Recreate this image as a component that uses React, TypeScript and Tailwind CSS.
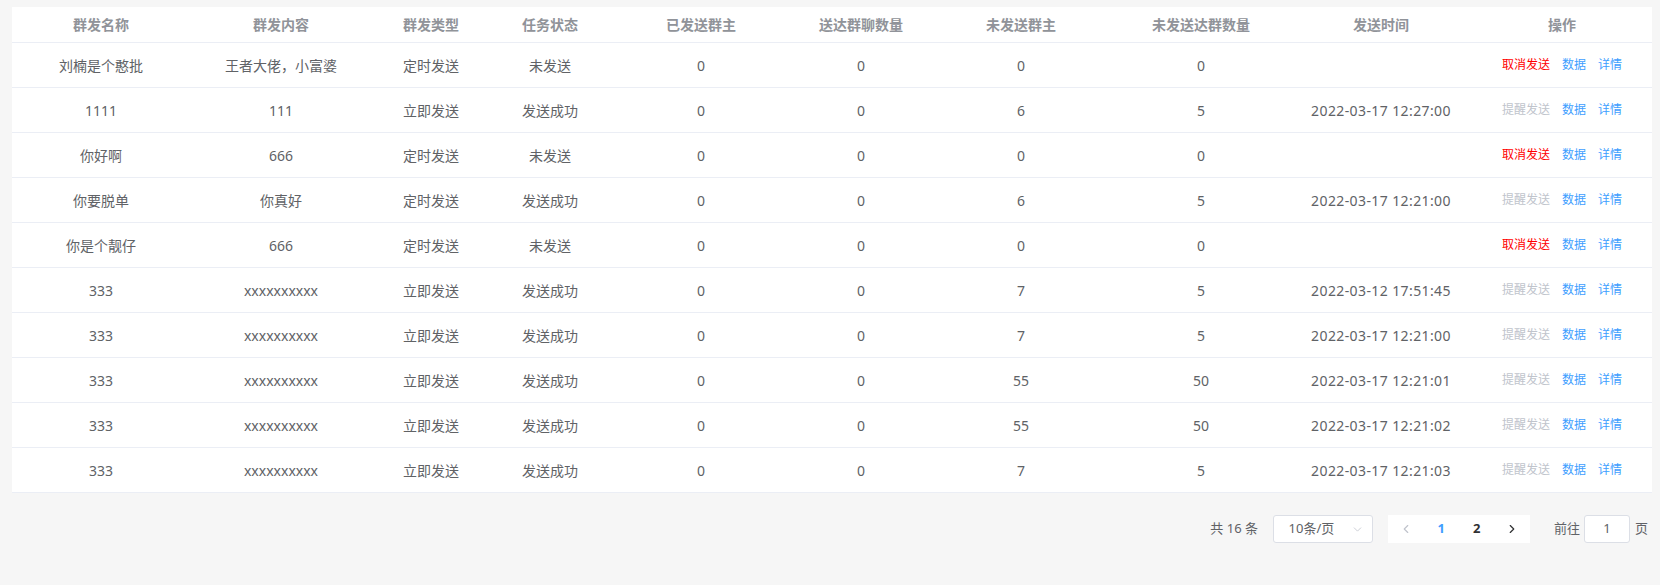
import { ChevronDown, ChevronLeft, ChevronRight } from "lucide-react";

type Row = {
  name: string;
  content: string;
  type: string;
  status: string;
  sent: string;
  reached: string;
  unsent: string;
  unreached: string;
  time: string;
  canCancel: boolean;
};

const headers = [
  "群发名称",
  "群发内容",
  "群发类型",
  "任务状态",
  "已发送群主",
  "送达群聊数量",
  "未发送群主",
  "未发送达群数量",
  "发送时间",
  "操作",
];

const rows: Row[] = [
  { name: "刘楠是个憨批", content: "王者大佬，小富婆", type: "定时发送", status: "未发送", sent: "0", reached: "0", unsent: "0", unreached: "0", time: "", canCancel: true },
  { name: "1111", content: "111", type: "立即发送", status: "发送成功", sent: "0", reached: "0", unsent: "6", unreached: "5", time: "2022-03-17 12:27:00", canCancel: false },
  { name: "你好啊", content: "666", type: "定时发送", status: "未发送", sent: "0", reached: "0", unsent: "0", unreached: "0", time: "", canCancel: true },
  { name: "你要脱单", content: "你真好", type: "定时发送", status: "发送成功", sent: "0", reached: "0", unsent: "6", unreached: "5", time: "2022-03-17 12:21:00", canCancel: false },
  { name: "你是个靓仔", content: "666", type: "定时发送", status: "未发送", sent: "0", reached: "0", unsent: "0", unreached: "0", time: "", canCancel: true },
  { name: "333", content: "xxxxxxxxxx", type: "立即发送", status: "发送成功", sent: "0", reached: "0", unsent: "7", unreached: "5", time: "2022-03-12 17:51:45", canCancel: false },
  { name: "333", content: "xxxxxxxxxx", type: "立即发送", status: "发送成功", sent: "0", reached: "0", unsent: "7", unreached: "5", time: "2022-03-17 12:21:00", canCancel: false },
  { name: "333", content: "xxxxxxxxxx", type: "立即发送", status: "发送成功", sent: "0", reached: "0", unsent: "55", unreached: "50", time: "2022-03-17 12:21:01", canCancel: false },
  { name: "333", content: "xxxxxxxxxx", type: "立即发送", status: "发送成功", sent: "0", reached: "0", unsent: "55", unreached: "50", time: "2022-03-17 12:21:02", canCancel: false },
  { name: "333", content: "xxxxxxxxxx", type: "立即发送", status: "发送成功", sent: "0", reached: "0", unsent: "7", unreached: "5", time: "2022-03-17 12:21:03", canCancel: false },
];

const cols =
  "grid grid-cols-[178px_182px_118px_120px_182px_138px_182px_178px_182px_180px]";

export default function App() {
  return (
    <div className="min-h-[585px] bg-[#f6f6f6] pt-[7px] pl-[12px] pr-[8px] font-['Noto_Sans','Noto_Sans_CJK_SC',sans-serif] text-[14px] text-[#606266]">
      {/* Table */}
      <div className="bg-white">
        <div className={`${cols} h-[36px] border-b border-[#ebeef5]`}>
          {headers.map((h) => (
            <div
              key={h}
              className="flex items-center justify-center whitespace-nowrap font-bold text-[#909399]"
            >
              {h}
            </div>
          ))}
        </div>
        {rows.map((r, i) => (
          <div
            key={i}
            className={`${cols} h-[45px] border-b border-[#ebeef5]`}
          >
            {[r.name, r.content, r.type, r.status, r.sent, r.reached, r.unsent, r.unreached].map(
              (v, j) => (
                <div
                  key={j}
                  className="flex items-center justify-center whitespace-nowrap"
                >
                  {v}
                </div>
              )
            )}
            <div className="flex items-center justify-center whitespace-nowrap tracking-[0.4px]">
              {r.time}
            </div>
            <div className="flex items-center justify-center gap-[12px] whitespace-nowrap text-[12px]">
              {r.canCancel ? (
                <span className="text-[#ff0000]">取消发送</span>
              ) : (
                <span className="text-[#c0c4cc]">提醒发送</span>
              )}
              <span className="text-[#409eff]">数据</span>
              <span className="text-[#409eff]">详情</span>
            </div>
          </div>
        ))}
      </div>

      {/* Pagination */}
      <div className="mt-[22px] flex items-center justify-end pr-[4px] text-[13px]">
        <span className="mr-[15px]">共 16 条</span>
        <div className="relative mr-[15px] flex h-[28px] w-[100px] items-center rounded-[3px] border border-[#dcdfe6] bg-white">
          <span className="w-[75px] text-center">10条/页</span>
          <ChevronDown className="absolute right-[8px] h-[13px] w-[13px] text-[#c0c4cc]" strokeWidth={1.5} />
        </div>
        <div className="flex h-[28px] items-center bg-white font-bold">
          <div className="flex w-[35.5px] justify-center text-[#c0c4cc]">
            <ChevronLeft className="h-[14px] w-[14px]" strokeWidth={2} />
          </div>
          <div className="w-[35.5px] text-center text-[#409eff]">1</div>
          <div className="w-[35.5px] text-center text-[#303133]">2</div>
          <div className="flex w-[35.5px] justify-center text-[#303133]">
            <ChevronRight className="h-[14px] w-[14px]" strokeWidth={2} />
          </div>
        </div>
        <span className="ml-[24px] mr-[4px]">前往</span>
        <div className="flex h-[28px] w-[46px] items-center justify-center rounded-[3px] border border-[#dcdfe6] bg-white">
          1
        </div>
        <span className="ml-[5px]">页</span>
      </div>
    </div>
  );
}
